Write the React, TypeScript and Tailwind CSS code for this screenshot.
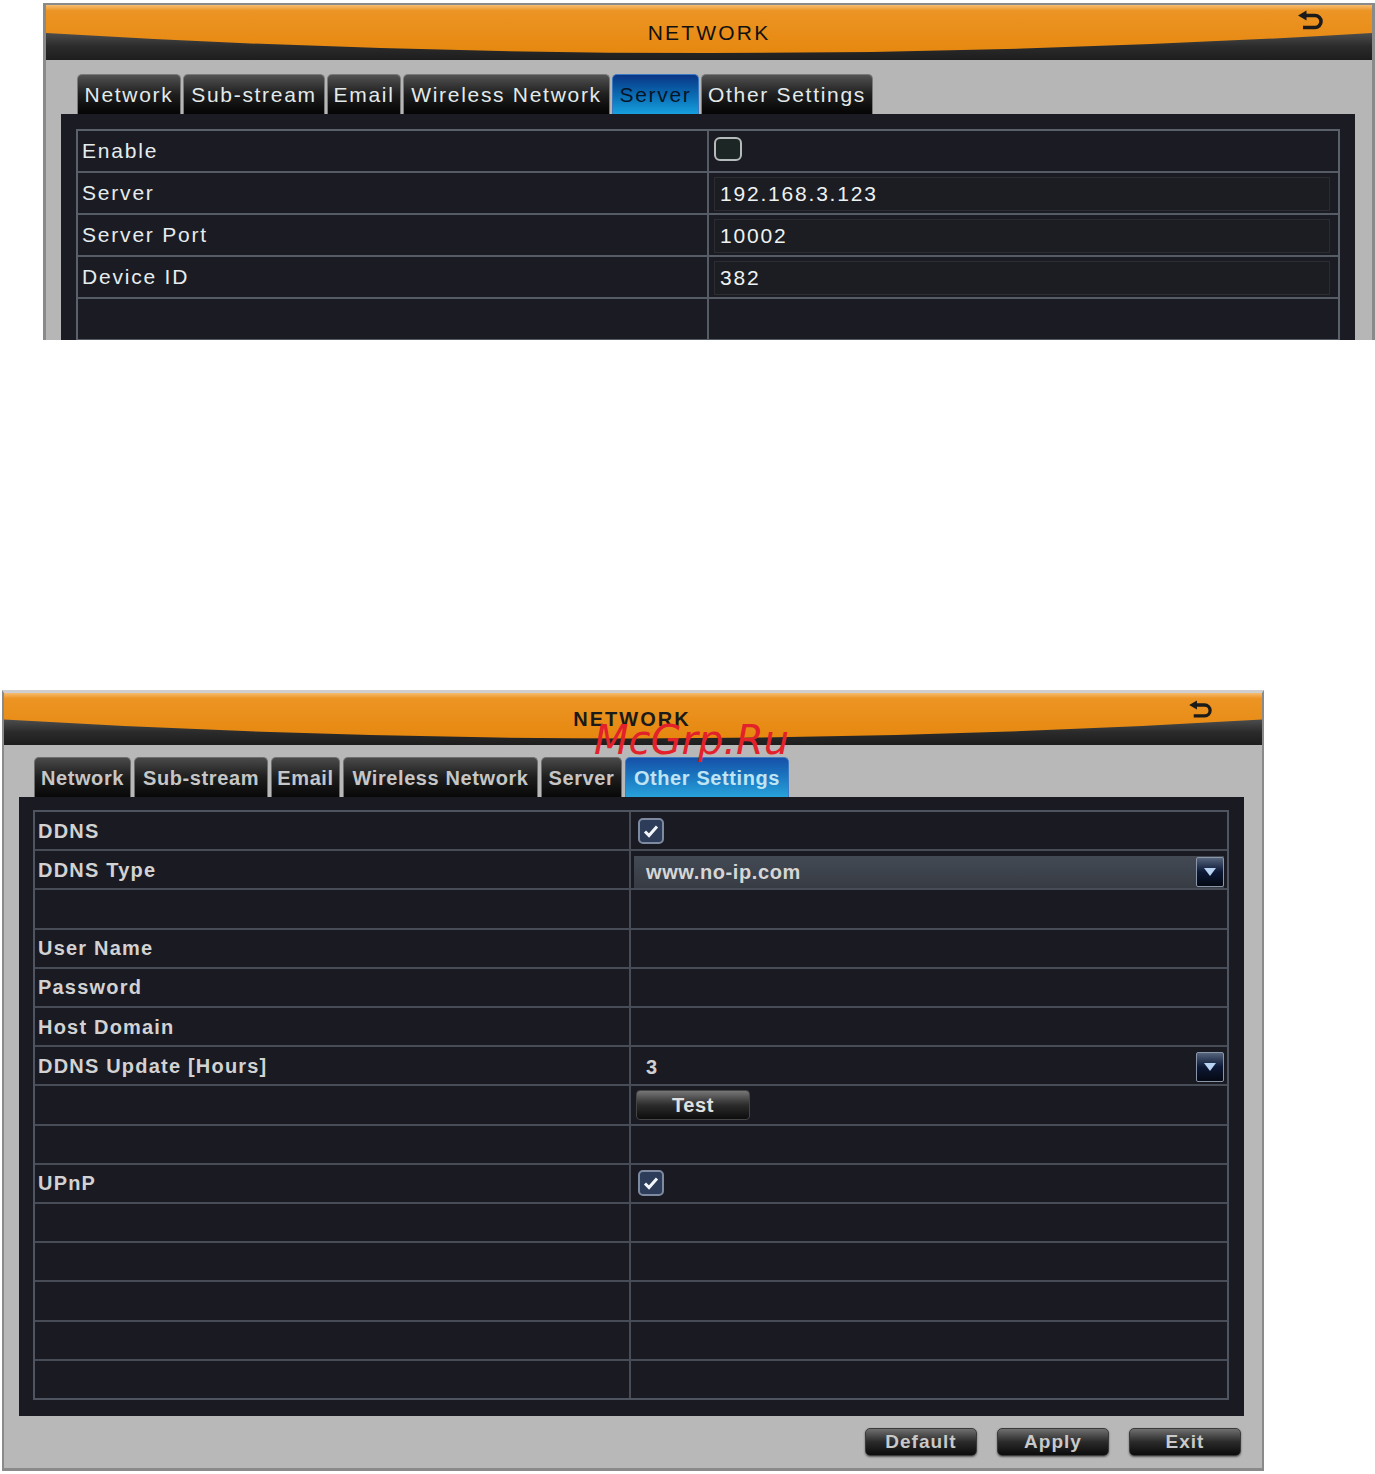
import React from 'react'

const sans = "font-['Liberation_Sans',Arial,sans-serif]"

function BackIcon({ w = 28, h = 22 }: { w?: number; h?: number }) {
  return (
    <svg width={w} height={h} viewBox="0 0 28 22">
      <path d="M7 5.5H18a6 6 0 0 1 0 12H6" stroke="#1b1b1b" strokeWidth="3.6" fill="none" />
      <path d="M1 5.5L9.5 0.5V10.5Z" fill="#1b1b1b" />
    </svg>
  )
}

function HeaderBg({ id }: { id: string }) {
  return (
    <svg className="absolute inset-0 h-full w-full" viewBox="0 0 100 55" preserveAspectRatio="none">
      <defs>
        <linearGradient id={`${id}-band`} x1="0" y1="0" x2="0" y2="1">
          <stop offset="0.45" stopColor="#555555" />
          <stop offset="0.75" stopColor="#2b2b2b" />
          <stop offset="1" stopColor="#1d1d1d" />
        </linearGradient>
        <linearGradient id={`${id}-or`} x1="0" y1="0" x2="0" y2="1">
          <stop offset="0" stopColor="#f7bd72" />
          <stop offset="0.12" stopColor="#ec9424" />
          <stop offset="1" stopColor="#e6880f" />
        </linearGradient>
      </defs>
      <rect width="100" height="55" fill={`url(#${id}-band)`} />
      <path d="M0 0H100V28Q50 68 0 28Z" fill={`url(#${id}-or)`} />
    </svg>
  )
}

function DropArrow() {
  return (
    <div className="flex h-[30px] w-[28px] items-center justify-center rounded-[2px] border border-[#8995a8] bg-gradient-to-b from-[#56647c] via-[#0d1836] to-[#050913]">
      <svg width="14" height="10" viewBox="0 0 14 10">
        <path d="M1 1H13L7 9Z" fill="#b9d3f2" />
      </svg>
    </div>
  )
}

function CheckOn() {
  return (
    <div className="flex h-[26px] w-[26px] items-center justify-center rounded-[5px] border-2 border-[#7d8aa0] bg-[#2d3c58]">
      <svg width="18" height="16" viewBox="0 0 18 16">
        <path d="M3 8.5l4 4 8-9" stroke="#f2f6fb" strokeWidth="3" fill="none" />
      </svg>
    </div>
  )
}

const topTabs = [
  { label: 'Network', w: 'w-[104px]' },
  { label: 'Sub-stream', w: 'w-[142px]' },
  { label: 'Email', w: 'w-[74px]' },
  { label: 'Wireless Network', w: 'w-[207px]' },
  { label: 'Server', w: 'w-[87px]', active: true },
  { label: 'Other Settings', w: 'w-[172px]' },
]

const bottomTabs = [
  { label: 'Network', w: 'w-[97px]' },
  { label: 'Sub-stream', w: 'w-[134px]' },
  { label: 'Email', w: 'w-[69px]' },
  { label: 'Wireless Network', w: 'w-[195px]' },
  { label: 'Server', w: 'w-[81px]' },
  { label: 'Other Settings', w: 'w-[164px]', active: true },
]

function TopPanel() {
  const rows: { label: string; value?: string; check?: boolean }[] = [
    { label: 'Enable', check: true },
    { label: 'Server', value: '192.168.3.123' },
    { label: 'Server Port', value: '10002' },
    { label: 'Device ID', value: '382' },
    { label: '' },
    { label: '' },
  ]
  return (
    <div className="h-[340px] overflow-hidden pl-[43px] pt-[3px]">
      <div className={`w-[1332px] border-x-[3px] border-t-2 border-[#8a8a8a] bg-[#b6b6b6] ${sans}`}>
        <div className="relative flex h-[55px] items-center justify-center">
          <HeaderBg id="top" />
          <span className="relative text-[21px] tracking-[2.2px] text-[#111]">NETWORK</span>
          <div className="absolute right-[47px] top-[5px]">
            <BackIcon />
          </div>
        </div>
        <div className="mt-[14px] flex h-[40px] gap-[2px] pl-[31px]">
          {topTabs.map((t) => (
            <div
              key={t.label}
              className={`flex items-center justify-center rounded-t-[5px] border border-b-0 text-[21px] tracking-[1.7px] ${t.w} ${
                t.active
                  ? 'border-[#3a78c0] bg-gradient-to-b from-[#0a3585] to-[#18a0de] text-[#061428]'
                  : 'border-[#7a7a7a] bg-gradient-to-b from-[#535353] via-[#1f1f1f] to-[#050505] text-[#e2eaea]'
              }`}
            >
              {t.label}
            </div>
          ))}
        </div>
        <div className="ml-[15px] w-[1294px] bg-[#1b1c23] px-[15px] pt-[15px] pb-[40px]">
          <div className="w-[1264px] border-2 border-[#5a616a]">
            {rows.map((r, i) => (
              <div key={i} className={i > 0 ? 'flex h-[42px] border-t-2 border-[#555c65]' : 'flex h-[40px]'}>
                <div className="flex w-[631px] items-center border-r-2 border-[#555c65] pl-[4px] text-[21px] tracking-[1.8px] text-[#e6ecee]">
                  {r.label}
                </div>
                <div className="flex flex-1 items-center pl-[5px] pr-[8px]">
                  {r.check && <div className="mb-[4px] h-[24px] w-[28px] rounded-[6px] border-2 border-[#b5baba] bg-[#1c2624]" />}
                  {r.value !== undefined && (
                    <div className="mt-[2px] flex h-[34px] w-full items-center border border-[#2c2d33] bg-[#1c1d22] pl-[5px] text-[21px] tracking-[1.8px] text-[#eef2f2]">
                      {r.value}
                    </div>
                  )}
                </div>
              </div>
            ))}
          </div>
        </div>
      </div>
    </div>
  )
}

function BottomPanel() {
  type Row = { label: string; kind?: 'check' | 'select' | 'num' | 'test' }
  const rows: Row[] = [
    { label: 'DDNS', kind: 'check' },
    { label: 'DDNS Type', kind: 'select' },
    { label: '' },
    { label: 'User Name' },
    { label: 'Password' },
    { label: 'Host Domain' },
    { label: 'DDNS Update [Hours]', kind: 'num' },
    { label: '', kind: 'test' },
    { label: '' },
    { label: 'UPnP', kind: 'check' },
    { label: '' },
    { label: '' },
    { label: '' },
    { label: '' },
    { label: '' },
  ]
  const btn =
    'flex h-[28px] w-[112px] items-center justify-center rounded-[5px] border border-[#3a3a3a] bg-gradient-to-b from-[#707070] via-[#2a2a2a] to-[#0c0c0c] text-[19px] font-bold tracking-[1px] text-[#c9c9c9] shadow-[0_1px_2px_rgba(0,0,0,0.5)]'
  return (
    <div className={`relative ml-[2px] w-[1262px] border-x-2 border-b-[3px] border-t-[3px] border-[#8a8a8a] border-t-[#cfcfcf] bg-[#b8b8b8] ${sans}`}>
      <div className="relative flex h-[52px] items-center justify-center">
        <HeaderBg id="bot" />
        <span className="relative pr-[2px] text-[20px] font-bold tracking-[2px] text-[#1a1a1a]">NETWORK</span>
        <div className="absolute right-[48px] top-[7px]">
          <BackIcon w={26} h={20} />
        </div>
      </div>
      <div className="mt-[12px] flex h-[40px] gap-[3px] pl-[30px]">
        {bottomTabs.map((t) => (
          <div
            key={t.label}
            className={`flex items-center justify-center rounded-t-[5px] border border-b-0 text-[20px] font-bold tracking-[0.6px] ${t.w} ${
              t.active
                ? 'border-[#3d7cc4] bg-gradient-to-b from-[#1650a8] to-[#28a2da] text-[#bfe4f4]'
                : 'border-[#6e6e6e] bg-gradient-to-b from-[#4a4a4a] via-[#1e1e1e] to-[#080808] text-[#c6c6c6]'
            }`}
          >
            {t.label}
          </div>
        ))}
      </div>
      <div className="ml-[15px] h-[619px] w-[1225px] bg-[#1a1a23] pl-[14px] pt-[13px]">
        <div className="flex h-[590px] w-[1196px] flex-col border-2 border-[#4f5560]">
          {rows.map((r, i) => (
            <div key={i} className={`flex flex-1 ${i > 0 ? 'border-t-2 border-[#474c57]' : ''}`}>
              <div className="flex w-[596px] items-center border-r-2 border-[#474c57] pl-[3px] text-[20px] font-bold tracking-[1.2px] text-[#d2d2d2]">
                {r.label}
              </div>
              <div className="flex flex-1 items-center pl-[3px] pr-[3px]">
                {r.kind === 'check' && (
                  <div className="ml-[4px]">
                    <CheckOn />
                  </div>
                )}
                {r.kind === 'select' && (
                  <div className="mt-[4px] flex h-[32px] w-full items-center justify-between bg-gradient-to-b from-[#444a54] to-[#363b44]">
                    <span className="pl-[12px] text-[20px] font-bold tracking-[0.6px] text-[#d6d6d6]">www.no-ip.com</span>
                    <DropArrow />
                  </div>
                )}
                {r.kind === 'num' && (
                  <div className="mt-[2px] flex w-full items-center justify-between">
                    <span className="pl-[12px] text-[20px] font-bold text-[#d0d0d0]">3</span>
                    <DropArrow />
                  </div>
                )}
                {r.kind === 'test' && (
                  <div className="ml-[2px] flex h-[30px] w-[114px] items-center justify-center rounded-[4px] border border-[#444] bg-gradient-to-b from-[#777] via-[#2c2c2c] to-[#0d0d0d] text-[20px] font-bold tracking-[0.6px] text-[#e0e0e0]">
                    Test
                  </div>
                )}
              </div>
            </div>
          ))}
        </div>
      </div>
      <div className="mt-[12px] mb-[12px] flex justify-end gap-[20px] pr-[21px]">
        <div className={btn}>Default</div>
        <div className={btn}>Apply</div>
        <div className={btn}>Exit</div>
      </div>
      <div className="pointer-events-none absolute left-[590px] top-[27px] font-['DejaVu_Sans',sans-serif] text-[40px] italic leading-[40px] text-[#e3212b]">
        McGrp.Ru
      </div>
    </div>
  )
}

export default function App() {
  return (
    <div className="h-[1474px] w-[1375px] overflow-hidden bg-white">
      <TopPanel />
      <div className="h-[350px]" />
      <BottomPanel />
    </div>
  )
}
